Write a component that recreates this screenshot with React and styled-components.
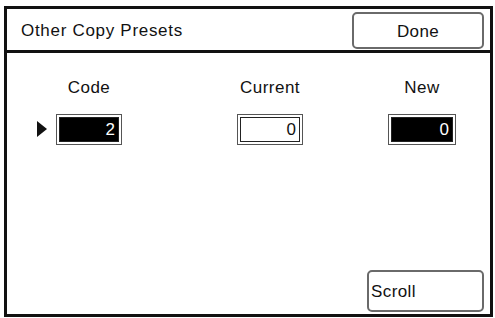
import styled, { createGlobalStyle } from "styled-components";

const GlobalStyle = createGlobalStyle`
  html, body {
    margin: 0;
    padding: 0;
    background: #ffffff;
  }
  body {
    font-family: "Liberation Sans", Arial, sans-serif;
    color: #111;
  }
`;

const Frame = styled.div`
  box-sizing: border-box;
  margin: 6px 0 0 4px;
  width: 489px;
  height: 311px;
  border: 3px solid #111;
  display: flex;
  flex-direction: column;
`;

const Header = styled.header`
  box-sizing: border-box;
  height: 44px;
  border-bottom: 3px solid #111;
  display: flex;
  align-items: flex-start;
  justify-content: space-between;
  padding: 3px 6px 0 14px;
`;

const Title = styled.h1`
  margin: 0;
  padding-top: 9px;
  font-size: 17px;
  font-weight: normal;
  letter-spacing: 0.7px;
  line-height: 20px;
`;

const Button = styled.button`
  box-sizing: border-box;
  width: ${(p) => p.$width}px;
  height: ${(p) => p.$height}px;
  border: 2px solid #6a6a6a;
  border-radius: 5px;
  background: #fff;
  font-family: "Liberation Sans", Arial, sans-serif;
  font-size: 17px;
  letter-spacing: 0.4px;
  color: #111;
  display: flex;
  align-items: center;
  justify-content: ${(p) => (p.$left ? "flex-start" : "center")};
  padding: ${(p) => (p.$left ? "2px 0 0 2px" : "2px 0 0 0")};
  cursor: pointer;
`;

const Body = styled.main`
  flex: 1;
  display: flex;
  flex-direction: column;
  padding: 25px 6px 2px 49px;
`;

const Row = styled.div`
  display: flex;
  align-items: flex-start;
`;

const Column = styled.div`
  display: flex;
  flex-direction: column;
  align-items: center;
  gap: 16px;
  margin-left: ${(p) => p.$offset}px;
`;

const Label = styled.div`
  font-size: 17px;
  letter-spacing: 0.5px;
  line-height: 20px;
`;

const FieldWrap = styled.div`
  position: relative;
`;

const Pointer = styled.span`
  position: absolute;
  left: -19px;
  top: 7px;
  width: 0;
  height: 0;
  border-top: 8px solid transparent;
  border-bottom: 8px solid transparent;
  border-left: 10px solid #111;
`;

const Field = styled.div`
  box-sizing: border-box;
  width: ${(p) => p.$width}px;
  height: 31px;
  border: 1px solid #555;
  padding: 2px;
  background: #fff;
`;

const FieldInner = styled.div`
  box-sizing: border-box;
  height: 100%;
  border: 1px solid #222;
  background: ${(p) => (p.$dark ? "#000" : "#fff")};
  color: ${(p) => (p.$dark ? "#fff" : "#111")};
  font-size: 17px;
  line-height: 24px;
  text-align: right;
  padding-right: 3px;
`;

const Footer = styled.div`
  margin-top: auto;
  display: flex;
  justify-content: flex-end;
`;

const columns = [
  { label: "Code", value: "2", dark: true, width: 66, offset: 0, pointer: true },
  { label: "Current", value: "0", dark: false, width: 66, offset: 115 },
  { label: "New", value: "0", dark: true, width: 68, offset: 85 },
];

export default function App() {
  return (
    <>
      <GlobalStyle />
      <Frame>
        <Header>
          <Title>Other Copy Presets</Title>
          <Button $width={132} $height={37}>Done</Button>
        </Header>
        <Body>
          <Row>
            {columns.map((c) => (
              <Column key={c.label} $offset={c.offset}>
                <Label>{c.label}</Label>
                <FieldWrap>
                  {c.pointer && <Pointer />}
                  <Field $width={c.width}>
                    <FieldInner $dark={c.dark}>{c.value}</FieldInner>
                  </Field>
                </FieldWrap>
              </Column>
            ))}
          </Row>
          <Footer>
            <Button $width={117} $height={42} $left>Scroll</Button>
          </Footer>
        </Body>
      </Frame>
    </>
  );
}
